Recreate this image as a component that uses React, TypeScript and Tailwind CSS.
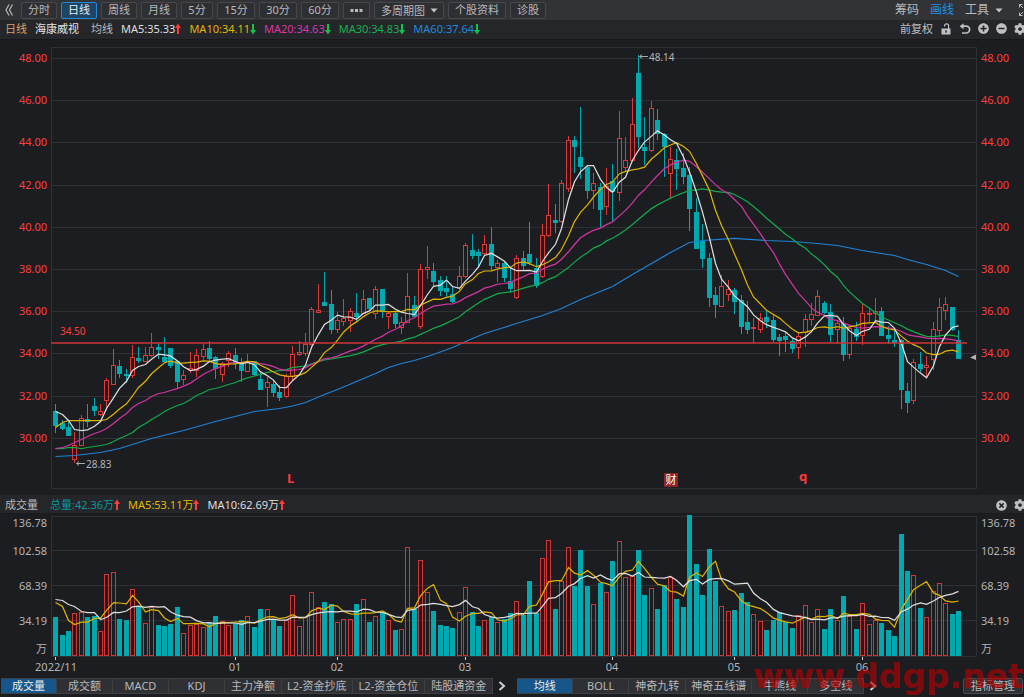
import React from "react";
import { FaCog, FaMinusCircle, FaPlusCircle, FaTimesCircle } from "react-icons/fa";

type Candle = ["r" | "c", number, number, number, number];

// Each candle: direction, high, body top, body bottom, low (chart units).
const CANDLES: Candle[] = [
  ["c", 404, 411, 425, 432], ["c", 420, 423, 428, 429], ["c", 422, 427, 435, 435], ["r", 432, 445, 459, 462],
  ["r", 415, 418, 445, 445], ["c", 404, 419, 421, 426], ["c", 398, 406, 410, 415], ["r", 404, 411, 414, 415],
  ["r", 378, 380, 400, 409], ["r", 349, 365, 384, 384], ["c", 360, 366, 373, 377], ["c", 369, 374, 375, 382],
  ["r", 345, 357, 375, 377], ["c", 347, 358, 360, 362], ["r", 347, 355, 361, 361], ["r", 333, 347, 355, 356],
  ["c", 343, 347, 349, 358], ["c", 337, 357, 361, 361], ["c", 348, 348, 365, 367], ["c", 360, 361, 381, 388],
  ["r", 370, 375, 379, 384], ["r", 352, 368, 370, 372], ["r", 349, 355, 370, 376], ["r", 343, 349, 356, 360],
  ["c", 341, 348, 358, 361], ["c", 356, 357, 368, 378], ["r", 362, 363, 374, 381], ["r", 351, 353, 360, 366],
  ["c", 348, 355, 363, 368], ["c", 358, 362, 370, 381], ["r", 354, 361, 371, 371], ["c", 361, 361, 374, 375],
  ["c", 373, 379, 389, 389], ["r", 377, 382, 387, 406], ["c", 381, 384, 392, 396], ["c", 385, 392, 397, 400],
  ["r", 374, 376, 396, 397], ["r", 346, 354, 376, 380], ["r", 341, 352, 354, 355], ["r", 333, 344, 353, 355],
  ["r", 307, 309, 344, 347], ["r", 284, 310, 312, 312], ["c", 272, 302, 305, 305], ["c", 290, 304, 329, 333],
  ["r", 312, 320, 329, 332], ["r", 299, 318, 321, 325], ["r", 308, 311, 320, 331], ["c", 293, 313, 316, 320],
  ["r", 290, 299, 313, 313], ["c", 298, 298, 308, 310], ["r", 286, 289, 313, 318], ["c", 289, 289, 311, 317],
  ["r", 311, 313, 316, 328], ["c", 312, 313, 323, 327], ["r", 317, 322, 327, 333], ["r", 273, 296, 322, 322],
  ["c", 296, 305, 316, 316], ["r", 264, 269, 326, 328], ["r", 246, 267, 269, 278], ["c", 263, 271, 281, 286],
  ["c", 276, 280, 290, 295], ["c", 276, 288, 291, 297], ["c", 286, 294, 301, 302], ["r", 266, 276, 287, 289],
  ["r", 243, 245, 276, 277], ["c", 234, 250, 255, 258], ["c", 249, 252, 255, 267], ["r", 235, 244, 253, 254],
  ["c", 227, 244, 265, 269], ["r", 260, 263, 267, 281], ["c", 262, 263, 277, 281], ["c", 268, 281, 288, 292],
  ["r", 255, 258, 297, 298], ["c", 251, 258, 265, 270], ["c", 222, 254, 262, 264], ["c", 258, 268, 285, 287],
  ["r", 224, 235, 276, 277], ["r", 184, 215, 235, 236], ["c", 204, 220, 222, 232], ["r", 180, 183, 221, 222],
  ["r", 136, 140, 188, 191], ["c", 136, 140, 146, 172], ["c", 107, 157, 166, 178], ["c", 166, 167, 190, 198],
  ["r", 173, 183, 190, 208], ["c", 183, 187, 209, 226], ["r", 168, 186, 206, 214], ["c", 164, 181, 191, 220],
  ["r", 111, 138, 192, 200], ["r", 137, 160, 167, 171], ["r", 98, 124, 160, 161], ["c", 55, 73, 136, 147],
  ["c", 117, 147, 150, 164], ["r", 101, 108, 150, 151], ["c", 109, 120, 133, 139], ["c", 133, 134, 146, 176],
  ["r", 147, 159, 173, 197], ["c", 149, 160, 168, 189], ["c", 153, 168, 176, 183], ["c", 167, 175, 208, 230],
  ["c", 198, 212, 248, 248], ["c", 224, 241, 258, 267], ["c", 253, 258, 297, 306], ["c", 287, 295, 304, 317],
  ["r", 275, 286, 306, 306], ["r", 280, 289, 294, 300], ["c", 288, 290, 301, 313], ["c", 295, 300, 326, 333],
  ["c", 301, 322, 329, 333], ["r", 318, 327, 328, 343], ["r", 313, 318, 329, 332], ["c", 311, 317, 321, 327],
  ["c", 314, 320, 339, 341], ["c", 334, 337, 340, 355], ["c", 332, 336, 339, 351], ["c", 339, 341, 348, 352],
  ["r", 332, 336, 347, 358], ["r", 314, 319, 332, 346], ["r", 303, 314, 319, 325], ["r", 290, 296, 315, 315],
  ["c", 301, 303, 312, 313], ["c", 304, 312, 334, 341], ["r", 320, 323, 329, 342], ["c", 317, 323, 354, 360],
  ["r", 327, 328, 354, 358], ["c", 322, 329, 336, 340], ["r", 303, 313, 335, 344], ["r", 309, 313, 314, 322],
  ["r", 298, 311, 313, 319], ["c", 307, 311, 335, 335], ["c", 326, 335, 338, 343], ["c", 330, 340, 342, 346],
  ["c", 339, 340, 389, 408], ["c", 383, 391, 402, 412], ["r", 359, 362, 400, 403], ["c", 352, 364, 368, 371],
  ["r", 356, 365, 367, 376], ["r", 322, 329, 359, 369], ["r", 298, 307, 330, 336], ["r", 297, 304, 310, 319],
  ["c", 307, 307, 329, 330], ["c", 330, 340, 358, 358],
];

// Top of every volume bar, measured downwards in thirds of a unit.
const VOLUME: number[] = [
  366, 420, 409, 355, 350, 365, 363, 408, 238, 232, 371, 375, 283, 333, 385, 336, 390, 393, 388, 336,
  415, 391, 387, 397, 380, 363, 378, 389, 388, 375, 364, 396, 341, 343, 374, 393, 376, 301, 394, 367,
  292, 337, 321, 328, 381, 373, 373, 327, 311, 381, 364, 350, 376, 406, 403, 157, 343, 196, 292, 349,
  391, 393, 399, 350, 277, 350, 393, 375, 366, 380, 373, 354, 319, 359, 258, 353, 190, 136, 341, 258,
  157, 273, 165, 273, 328, 263, 292, 198, 139, 246, 242, 165, 300, 280, 343, 270, 247, 311, 336, 61,
  207, 300, 162, 258, 334, 347, 346, 294, 321, 358, 378, 406, 376, 352, 382, 399, 361, 331, 382, 342,
  402, 343, 375, 303, 364, 402, 325, 388, 375, 384, 405, 423, 117, 228, 241, 338, 367, 287, 265, 324,
  358, 348,
];

const MA5_LEAD = [411, 414, 420, 429];
const MA10_LEAD = [427, 422, 420, 420, 420, 420, 420, 420, 419];
const MA20_LEAD = [448, 447, 445, 442, 439, 436, 433, 431, 428, 423, 418, 413, 407, 403, 400, 396, 393, 392, 390];
const MA30_LEAD = [
  448, 448, 447, 447, 448, 447, 446, 445, 444, 441, 438, 435, 432, 427, 423, 419, 415, 411, 408, 405, 403, 399, 395,
  392, 389, 388, 386, 384, 382,
];
const MA60: [number, number][] = [
  [0, 456], [3, 455], [7, 452], [10, 448], [15, 438], [20, 430], [25, 421], [31, 411], [35, 408], [37, 405.5],
  [39, 402], [42, 394], [44, 389], [47, 381], [50, 373], [52, 367], [54, 363], [56, 360], [59, 354], [62, 347],
  [65, 338], [67, 333], [69, 329], [72, 323], [76, 315], [79, 308], [82, 299], [87, 286], [90, 274], [93, 263],
  [96, 252], [99, 242], [101, 240], [106, 238], [111, 240], [115, 241], [119, 243], [122, 245], [126, 250],
  [131, 255], [133, 259], [136, 264], [139, 270], [141, 276],
];

const col = (i: number) => Math.round(55.2 + 6.405 * i);
const closes = CANDLES.map((c) => (c[0] === "r" ? c[2] : c[3]));
const volumeTops = VOLUME.map((v) => 495 + v / 3);

function average(values: number[], span: number, lead: number[]) {
  const line = values.map((_, i) => {
    if (i < span - 1) return lead[i];
    let sum = 0;
    for (let k = i - span + 1; k <= i; k++) sum += values[k];
    return sum / span;
  });
  return line.map((y, i) => `${col(i) + 0.5},${(y + 0.5).toFixed(1)}`).join(" ");
}

const PRICE_LINES = [
  { color: "#1f83d6", points: MA60.map(([i, y]) => `${col(i) + 0.5},${y + 0.5}`).join(" ") },
  { color: "#13a84a", points: average(closes, 30, MA30_LEAD) },
  { color: "#cf35a0", points: average(closes, 20, MA20_LEAD) },
  { color: "#dcb300", points: average(closes, 10, MA10_LEAD) },
  { color: "#dededf", points: average(closes, 5, MA5_LEAD) },
];
const VOLUME_LINES = [
  { color: "#dcb300", points: average(volumeTops, 5, [602, 606, 620, 624]) },
  { color: "#dededf", points: average(volumeTops, 10, [599, 600, 604, 606, 611, 612, 612, 619, 617]) },
];

const PRICES = ["48.00", "46.00", "44.00", "42.00", "40.00", "38.00", "36.00", "34.00", "32.00", "30.00"];
const VOLUMES: [string, number][] = [
  ["136.78", 527], ["102.58", 555], ["68.39", 590], ["34.19", 625], ["万", 653],
];
const MONTHS: [string, number][] = [["01", 28], ["02", 44], ["03", 64], ["04", 87], ["05", 106], ["06", 126]];

const RED = "#ff3d3d";
const CYAN = "#00a8b0";

function PriceChart() {
  return (
    <svg viewBox="0 40 1024 455" className="block w-full text-[11px]" role="img" aria-label="日线 K线图">
      <g fill="none" stroke="#2f3033" shapeRendering="crispEdges">
        <rect x="51.5" y="47.5" width="925" height="441" />
        {PRICES.map((p, i) => {
          const y = Math.round(58 + i * 42.2) + 0.5;
          return <path key={p} d={`M51 ${y}H977`} />;
        })}
      </g>
      {PRICES.map((p, i) => {
        const y = Math.round(58 + i * 42.2) + 4;
        return (
          <g key={p} fill={RED}>
            <text x="47" y={y} textAnchor="end">{p}</text>
            <text x="981" y={y}>{p}</text>
          </g>
        );
      })}
      <g shapeRendering="crispEdges">
        {CANDLES.map(([kind, high, top, bottom, low], i) => {
          const x = col(i);
          const h = Math.max(1, bottom - top);
          return kind === "c" ? (
            <g key={i} fill={CYAN}>
              <rect x={x} y={high} width="1" height={low - high + 1} />
              <rect x={x - 2} y={top} width="5" height={h + 1} />
            </g>
          ) : (
            <g key={i} fill="none" stroke="#e03737">
              <path d={`M${x + 0.5} ${high}V${top}M${x + 0.5} ${bottom}V${low + 1}`} />
              <rect x={x - 1.5} y={top + 0.5} width="4" height={h} />
            </g>
          );
        })}
      </g>
      {PRICE_LINES.map((l) => (
        <polyline key={l.color} points={l.points} fill="none" stroke={l.color} strokeWidth="1.25" />
      ))}
      <path d="M51 343H967" stroke="#cf3434" strokeWidth="1.3" />
      <text x="60" y="335" fill={RED} className="text-[10px]">34.50</text>
      <g fill="none" stroke="#a9a9ab">
        <path d="M639.5 56.5H648M642 54.5L639.5 56.5L642 58.5" />
        <path d="M76.5 463.5H85M79 461.5L76.5 463.5L79 465.5" />
      </g>
      <g fill="#b4b4b6" className="text-[10px]">
        <text x="649" y="61">48.14</text>
        <text x="86" y="468">28.83</text>
      </g>
      <path d="M970 357.5L976 354.5V360Z" fill="#b4b4b6" />
      <g fill="#ff3838" className="text-[13px] font-bold">
        <text x="287" y="483">L</text>
        <text x="799" y="481">q</text>
      </g>
      <rect x="664" y="473" width="14" height="14" fill="#8e2226" />
      <text x="671" y="484" textAnchor="middle" fill="#ffffff">财</text>
    </svg>
  );
}

function VolumeChart() {
  return (
    <svg viewBox="0 514 1024 162" className="block w-full text-[11px]" role="img" aria-label="成交量图">
      <g fill="none" stroke="#2f3033" shapeRendering="crispEdges">
        <rect x="51.5" y="516.5" width="925" height="140" />
        <path d="M51 550.5H977M51 585.5H977M51 620.5H977" />
      </g>
      {VOLUMES.map(([label, y]) => (
        <g key={label} fill="#b4b4b6">
          <text x="47" y={y} textAnchor="end">{label}</text>
          <text x="981" y={y}>{label}</text>
        </g>
      ))}
      <g shapeRendering="crispEdges">
        {volumeTops.map((v, i) => {
          const y = Math.round(v);
          const x = col(i);
          return CANDLES[i][0] === "c" ? (
            <rect key={i} x={x - 2} y={y} width="5" height={656 - y} fill={CYAN} />
          ) : (
            <rect key={i} x={x - 1.5} y={y + 0.5} width="4" height={655 - y} fill="none" stroke="#d63535" />
          );
        })}
      </g>
      {VOLUME_LINES.map((l) => (
        <polyline key={l.color} points={l.points} fill="none" stroke={l.color} strokeWidth="1.25" />
      ))}
      <path d={`M55.5 657V660${MONTHS.map(([, i]) => `M${col(i) + 0.5} 657V660`).join("")}`} stroke="#d0d0d2" />
      <g fill="#b4b4b6" textAnchor="middle">
        <text x="56" y="671">2022/11</text>
        {MONTHS.map(([m, i]) => (
          <text key={m} x={col(i)} y="671">{m}</text>
        ))}
      </g>
    </svg>
  );
}

function Arrow({ up }: { up?: boolean }) {
  return (
    <svg viewBox="0 0 6 12" className={up ? "h-3 w-1.5 text-[#ff3b3b]" : "h-3 w-1.5 text-[#12c24e]"} fill="currentColor" aria-hidden="true">
      <path d={up ? "M3 0.5L6 5H4V11H2V5H0Z" : "M3 11.5L6 7H4V1H2V7H0Z"} />
    </svg>
  );
}

function Caret() {
  return (
    <svg viewBox="0 0 8 5" className="h-[5px] w-2" fill="#c4c4c6" aria-hidden="true">
      <path d="M0.5 0.5H7.5L4 4.5Z" />
    </svg>
  );
}

const PERIOD = "flex h-[17px] shrink-0 items-center justify-center rounded-xs border border-[#47484c] bg-[#2e2f33] px-1.5";
const MINUTES = "flex h-[17px] w-[38px] shrink-0 items-center justify-center rounded-xs border border-[#47484c] bg-[#2e2f33]";

function Toolbar() {
  return (
    <header className="flex h-5 items-center justify-between overflow-hidden bg-[#323337] text-[11px] text-[#b9b9bb]">
      <nav className="flex items-center gap-1" aria-label="周期">
        <button className="flex w-[17px] justify-center" aria-label="收起">
          <svg viewBox="0 0 10 12" className="h-3 w-2.5" fill="none" stroke="#b9b9bb" strokeWidth="1.2">
            <path d="M5 0.5L2 6L5 11.5M8.5 0.5L5.5 6L8.5 11.5" />
          </svg>
        </button>
        <button className={PERIOD}>分时</button>
        <button aria-pressed="true" className="flex h-[17px] shrink-0 items-center justify-center rounded-xs border border-[#2686cf] bg-[#1c4568] px-1.5 text-[#ececec]">日线</button>
        <button className={PERIOD}>周线</button>
        <button className={PERIOD}>月线</button>
        <button className="flex h-[17px] w-8 shrink-0 items-center justify-center rounded-xs border border-[#47484c] bg-[#2e2f33]">5分</button>
        <button className={MINUTES}>15分</button>
        <button className={MINUTES}>30分</button>
        <button className={MINUTES}>60分</button>
        <button className={PERIOD} aria-label="更多周期">
          <svg viewBox="0 0 13 3" className="h-[3px] w-[13px]" fill="#b9b9bb">
            <path d="M0.5 0h3v3h-3zM5 0h3v3H5zM9.5 0h3v3h-3z" />
          </svg>
        </button>
        <div className="relative flex items-center">
          <select aria-label="多周期图" className="h-[17px] w-[70px] appearance-none rounded-xs border border-[#47484c] bg-[#2e2f33] pr-4 pl-1.5 leading-[15px]">
            <option>多周期图</option>
          </select>
          <span className="pointer-events-none absolute right-1.5"><Caret /></span>
        </div>
        <button className={PERIOD}>个股资料</button>
        <button className={PERIOD}>诊股</button>
      </nav>
      <div className="flex shrink-0 items-center gap-[11px] text-[12px]">
        <button>筹码</button>
        <button className="text-[#1f8fe6]">画线</button>
        <button className="flex items-center gap-1.5" aria-haspopup="menu">工具<Caret /></button>
        <button className="ml-1 w-1.5 overflow-hidden" aria-label="全屏">
          <svg viewBox="0 0 14 14" className="h-3.5 w-3.5" fill="none" stroke="#b9b9bb">
            <path d="M1.5 4.5V1.5H4.5M1.5 1.5L5 5M1.5 9.5V12.5H4.5M1.5 12.5L5 9M9.5 1.5H12.5V4.5M9.5 12.5H12.5V9.5" />
          </svg>
        </button>
      </div>
    </header>
  );
}

function Average({ text, color, up }: { text: string; color: string; up?: boolean }) {
  return (
    <span className="flex items-center whitespace-nowrap">
      <span className={color}>{text}</span>
      <Arrow up={up} />
    </span>
  );
}

function InfoBar() {
  return (
    <section className="flex h-5 items-center justify-between overflow-hidden border-b border-[#18181b] bg-[#25262a] pb-0.5 text-[11px] text-[#b9b9bb]">
      <div className="flex shrink-0 items-center gap-2 pl-[5px]">
        <span className="text-[#d9a066]">日线</span>
        <span className="mr-1 text-[#e4e4e5]">海康威视</span>
        <span>均线</span>
        <Average text="MA5:35.33" color="text-[#dededf]" up />
        <Average text="MA10:34.11" color="text-[#e0b800]" />
        <Average text="MA20:34.63" color="text-[#d836a6]" />
        <Average text="MA30:34.83" color="text-[#16b04e]" />
        <Average text="MA60:37.64" color="text-[#2189de]" />
      </div>
      <div className="flex shrink-0 items-center gap-[7px] text-[#c0c0c2]">
        <button>前复权</button>
        <button aria-label="解锁">
          <svg viewBox="0 0 12 12" className="h-3 w-3">
            <path d="M4.6 3.4V2.8a2 2 0 0 1 4 0V6" fill="none" stroke="currentColor" strokeWidth="1.2" />
            <path d="M1.5 5.5H10.5V11.5H1.5ZM5.3 7.3V9.7H6.7V7.3Z" fill="currentColor" fillRule="evenodd" />
          </svg>
        </button>
        <button aria-label="撤销">
          <svg viewBox="0 0 12 12" className="h-3 w-3" fill="none" stroke="currentColor" strokeWidth="1.7">
            <path d="M2 3.2H7.2A3.4 3.4 0 0 1 7.2 10H3" />
            <path d="M4.6 0.2L0.6 3.2L4.6 6.2Z" fill="currentColor" stroke="none" />
          </svg>
        </button>
        <button aria-label="放大"><FaPlusCircle className="h-[11px] w-[11px]" /></button>
        <button aria-label="缩小"><FaMinusCircle className="h-[11px] w-[11px]" /></button>
        <button className="w-2.5 overflow-hidden" aria-label="设置"><FaCog className="h-3 w-3" /></button>
      </div>
    </section>
  );
}

function VolumeBar() {
  return (
    <section className="flex h-[19px] items-center justify-between border-b border-[#1b1b1e] bg-[#25262a] pt-0.5 text-[11px] text-[#b9b9bb]">
      <div className="flex shrink-0 items-center gap-2 pl-[5px]">
        <span className="mr-1">成交量</span>
        <Average text="总量:42.36万" color="text-[#0b979d]" up />
        <Average text="MA5:53.11万" color="text-[#e0b800]" up />
        <Average text="MA10:62.69万" color="text-[#dededf]" up />
      </div>
      <div className="flex shrink-0 items-center gap-[7px] text-[#c0c0c2]">
        <button aria-label="关闭"><FaTimesCircle className="h-[11px] w-[11px]" /></button>
        <button className="w-2.5 overflow-hidden" aria-label="设置"><FaCog className="h-3 w-3" /></button>
      </div>
    </section>
  );
}

function Tabs({ items, label }: { items: string[]; label: string }) {
  return (
    <div role="tablist" aria-label={label} className="flex h-4 shrink-0 border-y border-[#3e3f43] bg-[#2f3034]">
      {items.map((t, i) => (
        <button
          key={t}
          role="tab"
          aria-selected={i === 0}
          className={
            i === 0
              ? "flex min-w-14 items-center justify-center border-r border-[#3e3f43] bg-[#17568a] px-1.5 text-[#ececec]"
              : "flex min-w-14 items-center justify-center border-r border-[#3e3f43] px-[5px] last:px-1.5 odd:px-1.5"
          }
        >
          {t}
        </button>
      ))}
    </div>
  );
}

function More({ label }: { label: string }) {
  return (
    <button aria-label={label} className="flex w-6 shrink-0 items-center pl-[5px]">
      <svg viewBox="0 0 8 10" className="h-2.5 w-2" fill="none" stroke="#d0d0d2" strokeWidth="2">
        <path d="M1.5 1L6 5L1.5 9" />
      </svg>
    </button>
  );
}

export default function App() {
  return (
    <main className="relative min-h-screen overflow-hidden bg-[#1c1d20] font-['Noto_Sans','Noto_Sans_CJK_SC',sans-serif] leading-4">
      <Toolbar />
      <InfoBar />
      <PriceChart />
      <VolumeBar />
      <VolumeChart />
      <footer className="relative flex items-center overflow-hidden pt-0.5 pb-[3px] pl-px text-[11px] whitespace-nowrap text-[#b9b9bb]">
        <Tabs label="副图指标" items={["成交量", "成交额", "MACD", "KDJ", "主力净额", "L2-资金抄底", "L2-资金仓位", "陆股通资金"]} />
        <More label="更多副图指标" />
        <Tabs label="主图指标" items={["均线", "BOLL", "神奇九转", "神奇五线谱", "牛熊线", "多空线"]} />
        <More label="更多主图指标" />
        <button className="mr-px ml-auto flex h-4 shrink-0 items-center rounded-xs border border-[#4a4b4f] bg-[#2f3034] px-[7px]">指标管理</button>
      </footer>
      <p className="pointer-events-none absolute bottom-0 left-[753px] font-['DejaVu_Sans',sans-serif] text-[33px] leading-10 font-bold whitespace-nowrap text-[#b80000]/65">
        www.ddgp.net
      </p>
    </main>
  );
}
